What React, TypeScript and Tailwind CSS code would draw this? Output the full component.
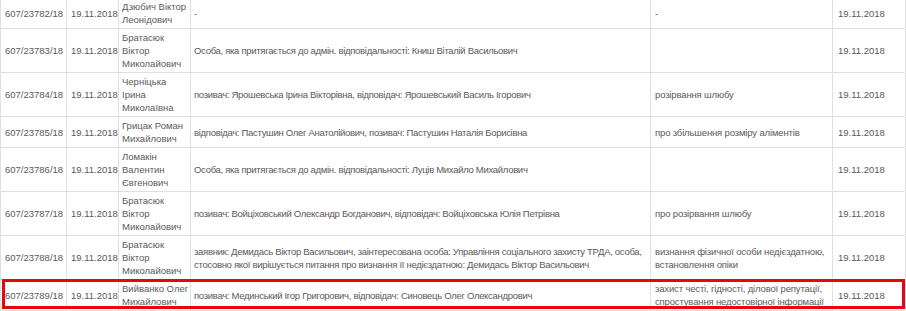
import React from "react";

type Row = {
  id: string;
  date: string;
  judge: string[];
  parties: string[];
  subject: string[];
  date2: string;
  highlight?: boolean;
};

const rows: Row[] = [
  { id: "607/23782/18", date: "19.11.2018", judge: ["Дзюбич Віктор", "Леонідович"], parties: ["-"], subject: ["-"], date2: "19.11.2018" },
  { id: "607/23783/18", date: "19.11.2018", judge: ["Братасюк", "Віктор", "Миколайович"], parties: ["Особа, яка притягається до адмін. відповідальності: Книш Віталій Васильович"], subject: [], date2: "19.11.2018" },
  { id: "607/23784/18", date: "19.11.2018", judge: ["Черніцька", "Ірина", "Миколаївна"], parties: ["позивач: Ярошевська Ірина Вікторівна, відповідач: Ярошевський Василь Ігорович"], subject: ["розірвання шлюбу"], date2: "19.11.2018" },
  { id: "607/23785/18", date: "19.11.2018", judge: ["Грицак Роман", "Михайлович"], parties: ["відповідач: Пастушин Олег Анатолійович, позивач: Пастушин Наталія Борисівна"], subject: ["про збільшення розміру аліментів"], date2: "19.11.2018" },
  { id: "607/23786/18", date: "19.11.2018", judge: ["Ломакін", "Валентин", "Євгенович"], parties: ["Особа, яка притягається до адмін. відповідальності: Луців Михайло Михайлович"], subject: [], date2: "19.11.2018" },
  { id: "607/23787/18", date: "19.11.2018", judge: ["Братасюк", "Віктор", "Миколайович"], parties: ["позивач: Войціховський Олександр Богданович, відповідач: Войціховська Юлія Петрівна"], subject: ["про розірвання шлюбу"], date2: "19.11.2018" },
  { id: "607/23788/18", date: "19.11.2018", judge: ["Братасюк", "Віктор", "Миколайович"], parties: ["заявник: Демидась Віктор Васильович, заінтересована особа: Управління соціального захисту ТРДА, особа,", "стосовно якої вирішується питання про визнання її недієздатною: Демидась Віктор Васильович"], subject: ["визнання фізичної особи недієздатною,", "встановлення опіки"], date2: "19.11.2018" },
  { id: "607/23789/18", date: "19.11.2018", judge: ["Вийванко Олег", "Михайлович"], parties: ["позивач: Мединський Ігор Григорович, відповідач: Синовець Олег Олександрович"], subject: ["захист честі, гідності, ділової репутації,", "спростування недостовірної інформації"], date2: "19.11.2018", highlight: true },
];

function Lines({ lines }: { lines: string[] }) {
  return (
    <>
      {lines.map((l, i) => (
        <div key={i} className="whitespace-nowrap">{l}</div>
      ))}
    </>
  );
}

export default function App() {
  return (
    <div
      className="w-[906px] h-[311px] overflow-hidden bg-white text-[#5a5a5a] text-[9.5px] leading-[13px]"
      style={{ fontFamily: '"Liberation Sans", Arial, sans-serif' }}
    >
      <div className="w-[905px] -mt-[2px] border-l border-[#e0e0e0]">
        {rows.map((r) => (
          <div key={r.id} className="relative grid grid-cols-[66px_52px_72px_460px_182px_73px] border-b border-[#e0e0e0]">
            <div className="flex items-center px-[4px] py-[2px] border-r border-[#e0e0e0]">{r.id}</div>
            <div className="flex items-center px-[4px] py-[2px] border-r border-[#e0e0e0]">{r.date}</div>
            <div className="flex flex-col justify-center px-[3px] py-[2px] border-r border-[#e0e0e0]">
              <Lines lines={r.judge} />
            </div>
            <div className="flex flex-col justify-center px-[3px] py-[2px] border-r border-[#e0e0e0] tracking-[-0.3px]">
              <Lines lines={r.parties} />
            </div>
            <div className="flex flex-col justify-center px-[4px] py-[2px] border-r border-[#e0e0e0] tracking-[-0.15px]">
              <Lines lines={r.subject} />
            </div>
            <div className="flex items-center px-[5px] py-[2px] border-r border-[#e0e0e0]">{r.date2}</div>
            {r.highlight && (
              <div className="pointer-events-none absolute left-[1px] right-[0px] top-[-1px] bottom-[1px] border-[3px] border-[#e30613]" />
            )}
          </div>
        ))}
      </div>
    </div>
  );
}
